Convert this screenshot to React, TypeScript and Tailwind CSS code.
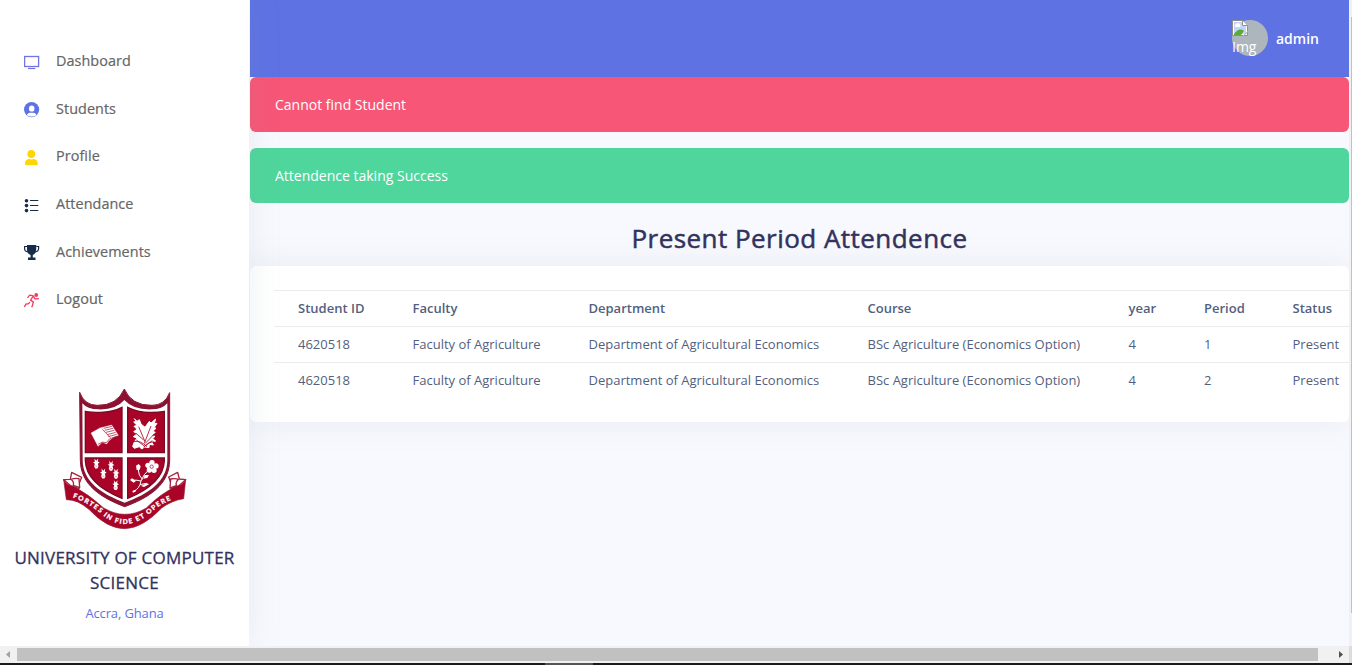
import React from "react";

const navItems = [
  {
    label: "Dashboard",
    icon: (
      <svg width="16" height="16" viewBox="0 0 16 16" fill="none" stroke="#7274e4">
        <rect x="0.6" y="1.5" width="14" height="10" strokeWidth="1.3" />
        <path d="M4 13.500h7.200" strokeWidth="1.200" />
      </svg>
    ),
  },
  {
    label: "Students",
    icon: (
      <svg width="16" height="16" viewBox="0 0 16 16">
        <circle cx="7.600" cy="7.600" r="7.600" fill="#5e72e4" />
        <rect x="5" y="3.400" width="5.400" height="6.200" rx="2.700" fill="#fff" />
        <path d="M2.800 12.900C4 10.900 5.300 10.700 7.600 10.700s3.800.2 5 2.200C11.200 14 9.500 14.500 7.600 14.500S4 14 2.800 12.900z" fill="#fff" />
      </svg>
    ),
  },
  {
    label: "Profile",
    icon: (
      <svg width="16" height="16" viewBox="0 0 16 16" fill="#ffd600">
        <ellipse cx="7.300" cy="4" rx="3.900" ry="4" />
        <path d="M1 14v-.6C1 10.500 3.500 9 5 9c1 .6 3.600.6 4.600 0 1.500 0 4.200 1.500 4.200 4.400v.6q0 1-1 1H2q-1 0-1-1z" />
      </svg>
    ),
  },
  {
    label: "Attendance",
    icon: (
      <svg width="16" height="16" viewBox="0 0 16 16" fill="#172b4d" className="relative top-px">
        <circle cx="2.500" cy="2.700" r="1.800" />
        <circle cx="2.500" cy="7.600" r="1.800" />
        <circle cx="2.500" cy="12.600" r="1.800" />
        <path d="M6 2h8.300v1.100H6zM6 7h8.300v1.100H6zM6 12h8.300v1.100H6z" />
      </svg>
    ),
  },
  {
    label: "Achievements",
    icon: (
      <svg width="16" height="16" viewBox="0 0 16 16">
        <path d="M3 0h9.200v4.500c0 3-1.600 5-3.400 5.500V12.500h2.700V15H4v-2.500h2.600V10C4.600 9.500 3 7.500 3 4.500z" fill="#172b4d" />
        <path d="M3 1.500H.6v2C.6 5.500 2 6.700 4 7M12.200 1.500h2.400v2c0 2-1.400 3.200-3.400 3.500" fill="none" stroke="#172b4d" strokeWidth="1.200" />
      </svg>
    ),
  },
  {
    label: "Logout",
    icon: (
      <svg width="16" height="16" viewBox="0 0 16 16" fill="none" stroke="#f5365c" strokeWidth="1.300">
        <circle cx="12.200" cy="2" r="1.900" fill="#f5365c" stroke="none" />
        <path d="M3.500 4.900 5.800 2.200 9.300 2.900 6.600 7.100 9.400 9.100 7.800 14.300M9.300 3.100l1.800 2.800 3.800-.2M5.800 9 4.600 10.700 1.900 11.200.3 13.900" strokeLinejoin="round" />
      </svg>
    ),
  },
];

const rows = [
  ["4620518", "Faculty of Agriculture", "Department of Agricultural Economics", "BSc Agriculture (Economics Option)", "4", "1", "Present"],
  ["4620518", "Faculty of Agriculture", "Department of Agricultural Economics", "BSc Agriculture (Economics Option)", "4", "2", "Present"],
];
const columns = ["Student ID", "Faculty", "Department", "Course", "year", "Period", "Status"];
const gridCols = "grid grid-cols-[114.500px_176px_279px_261px_75.500px_88.500px_80px] pl-6";

function Moth({ x, y }: { x: number; y: number }) {
  return (
    <g transform={`translate(${x} ${y}) scale(1.1)`} fill="#fff">
      <path d="M-5-14 0-8 5-14 4-6 9-3 4 0 6 7 3 13H-3L-6 7-4 0-9-4-4-5z" />
      <path d="M-3 7h6" stroke="#a90428" strokeWidth="1" />
    </g>
  );
}

function Crest() {
  return (
    <svg width="150" height="160" viewBox="0 0 450 480" className="block">
      <path d="M89 37Q103 76 142 76 201 77 223 27 244 77 306 76 344 76 359 38V240C359 315 295 354 224 380 155 354 91 315 91 240z" fill="#8c1231" stroke="#8c1231" strokeWidth="3" />
      <path d="M97 70Q112 88 145 88 197 90 223 60 250 90 305 88 337 88 352 70V240C352 305 295 342 224 368 155 342 98 305 98 240z" fill="#fff" />
      <path d="M106 94Q123 97 151 97 190 96 216 82V218H106zM233 82Q264 98 305 97 327 97 343 94V218H233zM106 234H216V355C158 331 108 298 106 242zM233 234H343V242C341 298 291 331 233 355z" fill="#a90428" stroke="#780a24" strokeWidth="4" />
      <g fill="#fff" stroke="#fff" strokeLinejoin="round">
        <path d="M123 159 151 143Q160 146 166 155L187 174Q177 180 170 192L157 187 144 199z" />
        <path d="M153 143 185 135 205 166 176 178z" />
      </g>
      <path d="m161 145 25-6m-22 12 25-6m-21 12 25-6m-21 13 25-7m-22 13 25-7M144 193q13-11 25-5l9-11 22-8M157 148l24 25" fill="none" stroke="#a90428" strokeWidth="2" />
      <path d="m253 116 8 8 7-5 5 13 12 10 13-18 5 5 14-12-4 14 8-1-8 12 5 3-10 9 8 3-13 10 12 2-7 7 9 7-12 2 5 10-12-2-1 10-13-2-9 6-7-7-15 5-5-6 5-13 8-12-11-4 12-9-11-6 10-7-9-9 9-3-10-10 8-2z" fill="#fff" stroke="#fff" strokeWidth="3" strokeLinejoin="round" />
      <path d="m266 140 19 45m18-47-20 52m-25-30 23 20m-22 0 24 18m29-35-27 28m22-9-26 19m-30-16q20-5 40 15m20-15q-15 0-28 14" stroke="#a90428" strokeWidth="2.500" fill="none" />
      <Moth x={139} y={251} />
      <Moth x={183} y={258} />
      <Moth x={160} y={281} />
      <Moth x={198} y={282} />
      <Moth x={197} y={316} />
      <path d="M250 335Q270 325 273 303 280 283 298 268M264 265l4 20 9 13M273 303l-17-3M270 314l19-4" fill="none" stroke="#fff" strokeWidth="3" />
      <g fill="#fff">
        <circle cx="306" cy="248" r="8" />
        <circle cx="318" cy="258" r="8" />
        <circle cx="312" cy="271" r="8" />
        <circle cx="298" cy="270" r="8" />
        <circle cx="294" cy="256" r="8" />
        <circle cx="305" cy="260" r="9" />
        <path d="m258 257 8-5 6 7-3 10-9 1zM240 300l6-5 13 7-8 6zM273 318l17-9 7 4-15 8zM247 333l9-4 2 5-9 4zM284 285l13 0-5 9-12 2z" />
      </g>
      <circle cx="305" cy="260" r="5" fill="none" stroke="#a90428" strokeWidth="2" />
      <g stroke="#a5233e" strokeWidth="4" fill="#fff" strokeLinejoin="round">
        <path d="M65 277 95 292 87 312 87 326 63 318 41 299 61 298z" />
        <path d="M63 298q12-4 24-2l2 27-19-7q3-11-7-18z" />
        <path d="M383 277 356 291 363 310 363 326 386 318 407 299 388 297z" />
        <path d="M386 298q-12-4-24-1l-2 27 19-7q-3-11 7-19z" />
      </g>
      <path d="M41 299Q50 317 70 319 115 342 160 383 192 403 224 403 258 403 289 384 331 342 378 319 399 316 407 299L401 356Q364 362 335 384 276 446 224 446 171 446 118 389 83 358 49 359z" fill="#a90428" stroke="#97203c" strokeWidth="2" />
      <path id="motto" d="M68 353Q105 364 145 394 183 432 224 432 267 432 312 390 340 366 379 355" fill="none" />
      <text className="font-['Lato',sans-serif] text-[20px] font-black" fill="#fff" stroke="#fff" strokeWidth="0.8">
        <textPath href="#motto" textLength="336" lengthAdjust="spacing">
          FORTES IN FIDE ET OPERE
        </textPath>
      </text>
    </svg>
  );
}

function BrokenImage() {
  return (
    <svg width="16" height="16" viewBox="0 0 16 16" className="block">
      <path d="M.5.500h10l5 5v10H.5z" fill="#fff" stroke="#8e8e8e" />
      <path d="M2 2h8v4h4v8H2z" fill="#c3d6fa" />
      <path d="M3.500 7a2 2 0 0 1 1-3.300A2 2 0 0 1 8 5a1.500 1.500 0 0 1 0 2z" fill="#fff" />
      <path d="M2 14c2-2.500 4-4.500 6.500-4.500 1.500 0 2.500.5 3.500 1.500l-3 4H2z" fill="#5aab35" />
      <path d="M10.500.500v5h5" fill="#fff" stroke="#8e8e8e" />
      <path d="M10.500 16 16 10.500V12l-4 4z" fill="#aeb6bf" />
    </svg>
  );
}

export default function App() {
  return (
    <div className="flex h-[665px] w-[1352px] flex-col overflow-hidden bg-[#f8f9fe] font-['Open_Sans',sans-serif] text-[#525f7f]">
      <div className="flex h-[646px]">
        <aside className="relative z-10 flex w-[249px] shrink-0 flex-col bg-white shadow-[0_0_32px_0_rgba(136,152,170,0.15)]">
          <nav className="flex flex-col pt-[37.400px]">
            {navItems.map((item) => (
              <a key={item.label} className="flex h-[47.600px] items-center pl-6">
                <span className="mt-[3px] w-8">{item.icon}</span>
                <span className="text-[14.400px] leading-6 tracking-[0.060px] text-[#666] [-webkit-text-stroke:0.2px_#666]">{item.label}</span>
              </a>
            ))}
          </nav>
          <div className="mt-[57px] flex justify-center">
            <Crest />
          </div>
          <h2 className="mt-[5px] text-center text-[17px] leading-[25.500px] tracking-[0.240px] text-[#32325d] [-webkit-text-stroke:0.3px_#32325d]">
            UNIVERSITY OF COMPUTER
            <br />
            SCIENCE
          </h2>
          <p className="mt-[7px] text-center text-[13px] leading-5 tracking-[-0.130px] text-[#5e72e4]">Accra, Ghana</p>
        </aside>
        <main className="ml-px flex w-[1099px] shrink-0 flex-col">
          <header className="flex h-[77px] items-center justify-end bg-[#5e72e4] pr-[30px]">
            <div className="mb-[2px] size-9 rounded-full bg-[#adb5bd] text-[14px] leading-[21px] text-white">
              <BrokenImage />
              Img
            </div>
            <span className="ml-2 text-[14px] font-semibold leading-5 text-white">admin</span>
          </header>
          <div className="flex h-[55px] items-center rounded-md bg-[#f75676] pl-[25px] text-[14px] text-white">Cannot find Student</div>
          <div className="mt-4 flex h-[55px] items-center rounded-md bg-[#4fd69c] pl-[25px] text-[14px] text-white">Attendence taking Success</div>
          <h1 className="mt-4 h-[47px] text-center text-[26px] leading-[39px] tracking-[0.460px] text-[#32325d] [-webkit-text-stroke:0.5px_#32325d]">Present Period Attendence</h1>
          <section className="h-[156px] rounded-md bg-white pl-6 pt-6 shadow-[0_0_32px_0_rgba(136,152,170,0.15)]">
            <div className="overflow-hidden text-[13px] leading-[35px]">
              <div className={gridCols + " border-t border-[#e9ecef] font-semibold"}>
                {columns.map((c) => (
                  <span key={c}>{c}</span>
                ))}
              </div>
              {rows.map((r, i) => (
                <div key={i} className={gridCols + " border-t border-[#e9ecef]"}>
                  {r.map((v, j) => (
                    <span key={j} className="whitespace-nowrap">{v}</span>
                  ))}
                </div>
              ))}
            </div>
          </section>
        </main>
        <div className="relative z-20 flex w-[3px] justify-end bg-[#f1f1f1] pt-[17px]">
          <div className="h-[596px] w-px bg-[#c1c1c1]" />
        </div>
      </div>
      <div className="relative z-20 flex h-[17px] shrink-0 items-center bg-[#f1f1f1]">
        <svg width="17" height="17" viewBox="0 0 17 17" fill="#a3a3a3">
          <path d="M10 5v7L6 8.500z" />
        </svg>
        <div className="h-[13px] w-[1301px] bg-[#c1c1c1]" />
        <div className="flex-1" />
        <svg width="17" height="17" viewBox="0 0 17 17" fill="#505050">
          <path d="M7 5v7l4-3.500z" />
        </svg>
        <div className="h-full w-[3px] bg-[#dcdcdc]" />
      </div>
      <div className="relative z-20 flex h-[2px] shrink-0 bg-[#1c1a1c] pl-[545px]">
        <div className="h-full w-12 bg-[#555355]" />
      </div>
    </div>
  );
}
